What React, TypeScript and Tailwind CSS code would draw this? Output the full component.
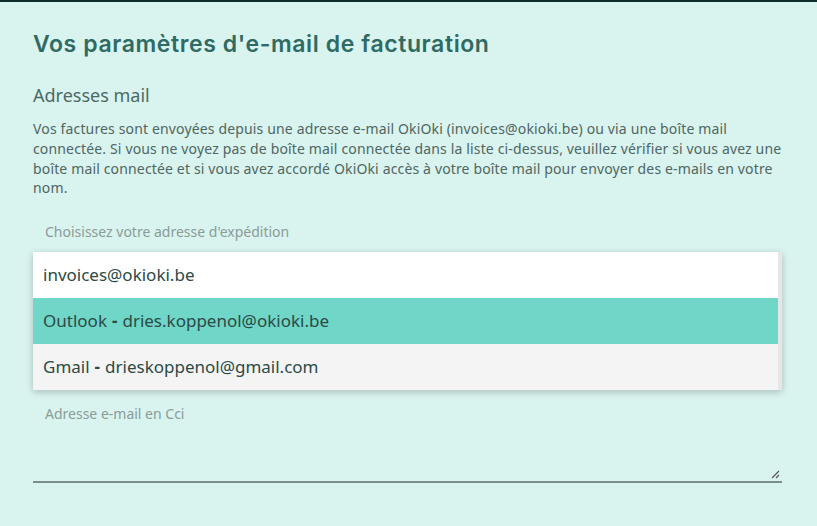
const options = [
  { id: "okioki", provider: "", email: "invoices@okioki.be" },
  { id: "outlook", provider: "Outlook", email: "dries.koppenol@okioki.be" },
  { id: "gmail", provider: "Gmail", email: "drieskoppenol@gmail.com" },
];

export default function App() {
  const selected = "outlook";
  const hovered = "gmail";

  return (
    <div className="min-h-[526px] w-full border-t-2 border-[#0d2e2b] bg-[#d9f3ef] px-[33px] pt-[27px] font-['Noto_Sans',sans-serif]">
      <h1 className="font-['Inter',sans-serif] text-[23px] font-semibold leading-[30px] tracking-[0.6px] text-[#2f6a64]">
        Vos paramètres d'e-mail de facturation
      </h1>

      <h2 className="mt-[24px] text-[18px] leading-[24px] text-[#4a6a66]">Adresses mail</h2>
      <p className="mt-[12px] w-[752px] text-[14px] leading-[19.8px] tracking-[0.15px] text-[#4f6662]">
        Vos factures sont envoyées depuis une adresse e-mail OkiOki (invoices@okioki.be) ou via une boîte mail
        connectée. Si vous ne voyez pas de boîte mail connectée dans la liste ci-dessus, veuillez vérifier si vous avez
        une boîte mail connectée et si vous avez accordé OkiOki accès à votre boîte mail pour envoyer des e-mails en
        votre nom.
      </p>

      <label className="mt-[24px] block pl-[12px] text-[14px] leading-[20px] text-[#8a9c98]">
        Choisissez votre adresse d'expédition
      </label>

      <div className="relative mt-[10px] flex w-[749px] bg-white shadow-[0_2px_7px_rgba(0,0,0,0.22)]">
        <ul className="flex-1">
          {options.map((o) => (
            <li
              key={o.id}
              className={
                "flex h-[46px] items-center px-[10px] text-[17px] text-[#2c4a46] " +
                (o.id === selected ? "bg-[#6fd6c8]" : o.id === hovered ? "bg-[#f4f4f4]" : "bg-white")
              }
            >
              {o.provider && (
                <>
                  {o.provider}
                  <span className="mx-[5px] font-bold">-</span>
                </>
              )}
              {o.email}
            </li>
          ))}
        </ul>
        <div className="w-[4px] bg-[#e6e6e6]" />
      </div>

      <label className="mt-[14px] block pl-[12px] text-[14px] leading-[20px] text-[#8a9c98]">
        Adresse e-mail en Cci
      </label>
      <div className="relative h-[59px] w-[749px] border-b-2 border-[#7a8e8b]">
        <svg className="absolute bottom-[2px] right-[2px]" width="9" height="9" viewBox="0 0 9 9">
          <path d="M8 1L1 8M8 5L5 8" stroke="#555" strokeWidth="1.2" />
        </svg>
      </div>
    </div>
  );
}
